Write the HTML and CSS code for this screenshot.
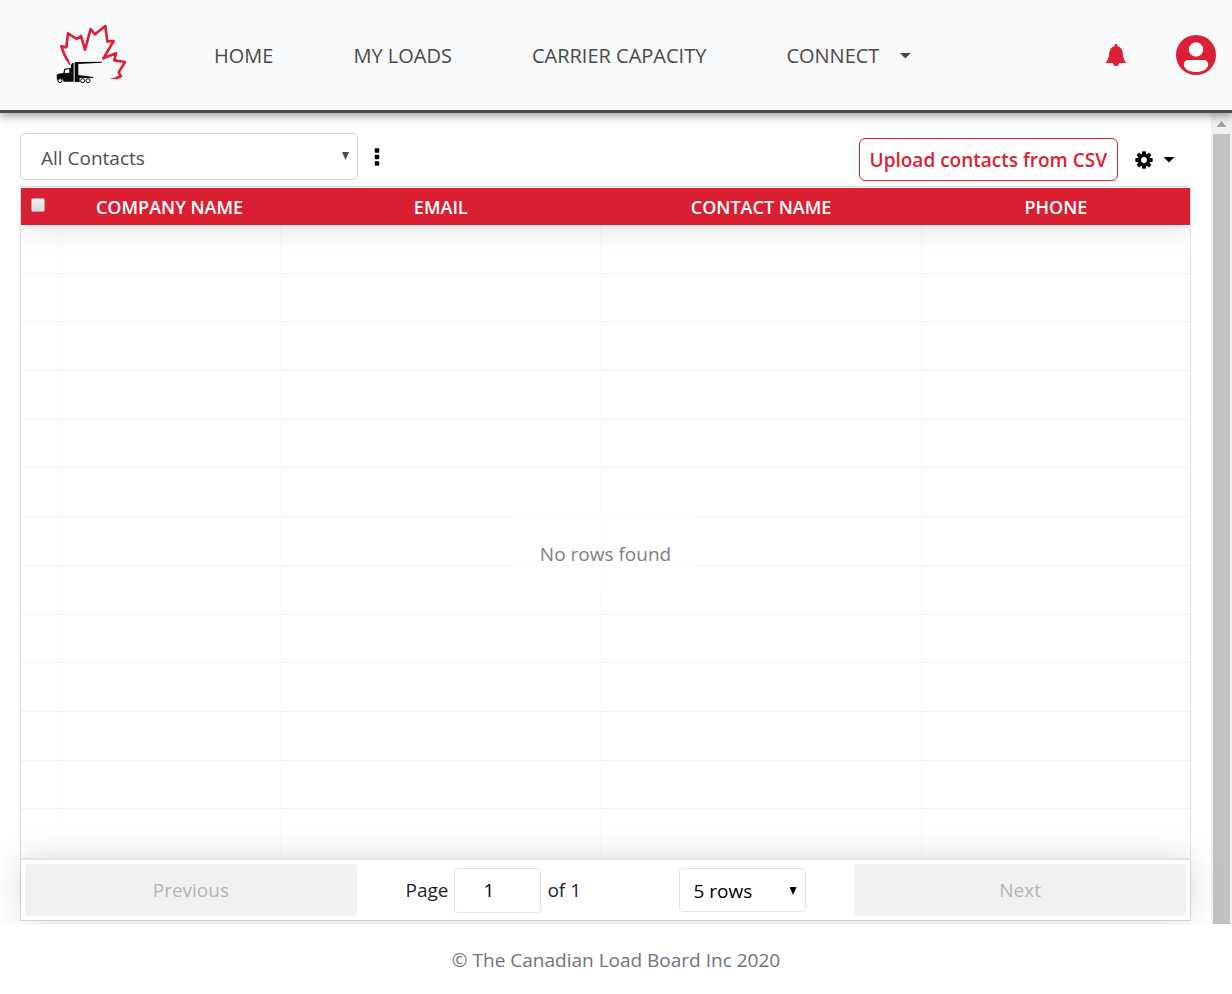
FILE: index.html
```html
<!DOCTYPE html>
<html lang="en">
<head>
<meta charset="utf-8">
<title>The Canadian Load Board</title>
<meta name="viewport" content="width=device-width, initial-scale=1">
<link rel="stylesheet" href="styles.css">
</head>
<body>
<header class="topbar">
  <a class="brand" href="#" aria-label="The Canadian Load Board">
    <svg class="brand-logo" viewBox="0 0 330 270" aria-hidden="true">
      <path d="M82 151C75 139 68 122 64 109L79 112L84 70L110 87L123 78L135 119L152 57L165 73L196 48L202 94L221 93L190 145L228 130L223 151L255 156L236 187L243 199L228 205" fill="none" stroke="#dc1f3a" stroke-width="8" stroke-linejoin="round"/>
      <path d="M86 148L92 165L88 165L78 150ZM209 206L234 200L230 208Z" fill="#dc1f3a"/>
      <path d="M50 195L55 191L70 189L73 176L92 174L93 165L97 159L101 159L101 215L71 215C70 203 53 202 51 214ZM104 156L186 155L186 158L115 162L115 195L160 201L160 204L119 204L119 216L104 216Z" fill="#0b0b0b"/>
      <path d="M76 179L88 178V188L74 189Z" fill="#f8f9fb"/>
      <g fill="#f8f9fb" stroke="#0b0b0b" stroke-width="3"><circle cx="60" cy="212" r="6"/><circle cx="128" cy="212" r="6"/><circle cx="144" cy="212" r="6"/></g>
    </svg>
  </a>
  <nav class="nav">
    <a href="#">HOME</a>
    <a href="#">MY LOADS</a>
    <a href="#">CARRIER CAPACITY</a>
    <a class="nav-menu" href="#">CONNECT <span class="caret"></span></a>
  </nav>
  <div class="account">
    <button class="plain-button" type="button" aria-label="Notifications">
      <svg class="bell" viewBox="0 0 22 24" aria-hidden="true"><path d="M11 1c.9 0 1.500.6 1.500 1.500v.7c3.100.7 5 3.300 5.200 6.300.3 5 1.300 7.600 3.800 10.500H.5C3 17.100 4 14.500 4.300 9.500 4.500 6.500 6.400 3.900 9.500 3.200v-.7C9.500 1.600 10.100 1 11 1ZM8 19.500h6c0 2.600-1.300 3.600-3 3.600s-3-1-3-3.600Z" fill="#dc1f35"/></svg>
    </button>
    <button class="plain-button" type="button" aria-label="Account">
      <svg class="avatar" viewBox="0 0 40 40" aria-hidden="true"><circle cx="20" cy="20" r="20" fill="#dc1f35"/><circle cx="20" cy="14.500" r="7.200" fill="#fff"/><path d="M12.500 25h15c3 0 4.600 2 4.600 4.500 0 5-6 7.500-12.100 7.500S7.900 34.500 7.900 29.500C7.900 27 9.500 25 12.500 25Z" fill="#fff"/></svg>
    </button>
  </div>
</header>

<div class="viewport">
  <main class="content">
    <div class="toolbar">
      <div class="toolbar-group">
        <div class="select-wrap">
          <select class="list-select" aria-label="Contact list"><option>All Contacts</option></select>
          <span class="select-arrow"></span>
        </div>
        <button class="plain-button" type="button" aria-label="List options">
          <svg class="kebab" viewBox="0 0 6 18" aria-hidden="true"><path d="M1.500 1h3v3h-3ZM1.500 7.500h3v3h-3ZM1.500 14h3v3h-3Z" fill="#000" stroke="#000" stroke-width="1.500" stroke-linejoin="round"/></svg>
        </button>
      </div>
      <div class="toolbar-group toolbar-actions">
        <button class="upload" type="button">Upload contacts from CSV</button>
        <button class="plain-button settings" type="button" aria-label="Settings">
          <svg class="gear" viewBox="0 0 20 20" aria-hidden="true"><g fill="#000"><circle cx="10" cy="10" r="6.600"/><rect x="8" y="1.300" width="4" height="17.400" rx=".8"/><rect x="8" y="1.300" width="4" height="17.400" rx=".8" transform="rotate(45 10 10)"/><rect x="8" y="1.300" width="4" height="17.400" rx=".8" transform="rotate(90 10 10)"/><rect x="8" y="1.300" width="4" height="17.400" rx=".8" transform="rotate(135 10 10)"/></g><circle cx="10" cy="10" r="2.900" fill="#fff"/></svg>
          <span class="caret"></span>
        </button>
      </div>
    </div>

    <section class="grid">
      <div class="table-area">
        <table class="contacts">
          <thead>
            <tr>
              <th class="col-check"><input class="check" type="checkbox" aria-label="Select all contacts"></th>
              <th class="col-company">COMPANY NAME</th>
              <th class="col-wide">EMAIL</th>
              <th class="col-wide">CONTACT NAME</th>
              <th>PHONE</th>
            </tr>
          </thead>
          <tbody>
            <tr><td></td><td></td><td></td><td></td><td></td></tr>
            <tr><td></td><td></td><td></td><td></td><td></td></tr>
            <tr><td></td><td></td><td></td><td></td><td></td></tr>
            <tr><td></td><td></td><td></td><td></td><td></td></tr>
            <tr><td></td><td></td><td></td><td></td><td></td></tr>
            <tr><td></td><td></td><td></td><td></td><td></td></tr>
            <tr><td></td><td></td><td></td><td></td><td></td></tr>
            <tr><td></td><td></td><td></td><td></td><td></td></tr>
            <tr><td></td><td></td><td></td><td></td><td></td></tr>
            <tr><td></td><td></td><td></td><td></td><td></td></tr>
            <tr><td></td><td></td><td></td><td></td><td></td></tr>
            <tr><td></td><td></td><td></td><td></td><td></td></tr>
            <tr><td></td><td></td><td></td><td></td><td></td></tr>
          </tbody>
        </table>
      </div>
      <div class="pager">
        <button class="pager-button" type="button" disabled>Previous</button>
        <div class="pager-center">
          <label class="page-label">Page <input class="page-input" type="text" inputmode="numeric" value="1"> of 1</label>
          <div class="select-wrap rows-wrap">
            <select class="rows-select" aria-label="Rows per page"><option>5 rows</option></select>
            <span class="select-arrow"></span>
          </div>
        </div>
        <button class="pager-button" type="button" disabled>Next</button>
      </div>
      <div class="no-data">No rows found</div>
    </section>
  </main>
  <div class="scrollbar" aria-hidden="true">
    <span class="scroll-up"></span>
    <span class="scroll-thumb"></span>
  </div>
</div>

<footer class="footer">© The Canadian Load Board Inc 2020</footer>
</body>
</html>
```

FILE: styles.css
```css
* { box-sizing: border-box; }

body {
  margin: 0;
  min-height: 100vh;
  display: flex;
  flex-direction: column;
  background: #fff;
  color: #212529;
  font-family: "Open Sans", "Noto Sans", sans-serif;
  font-size: 19px;
  line-height: 28px;
}

button, input, select { font: inherit; color: inherit; }

.plain-button {
  display: flex;
  align-items: center;
  padding: 0;
  border: 0;
  background: none;
}

.caret {
  width: 12px;
  height: 6px;
  background: currentColor;
  clip-path: polygon(0 0, 100% 0, 50% 100%);
}

.topbar {
  position: relative;
  z-index: 2;
  display: flex;
  align-items: center;
  padding: 10px 16px 10px 40px;
  background: #f8f9fb;
  border-bottom: 3px solid #4a4a4a;
  box-shadow: 0 3px 9px rgba(0, 0, 0, .38);
}

.brand { display: block; margin-right: 64px; }
.brand-logo { display: block; width: 110px; height: 90px; }

.nav { display: flex; gap: 80px; padding-top: 1px; font-size: 20px; font-weight: 500; }
.nav a { color: #4a4a4a; text-decoration: none; white-space: nowrap; }
.nav-menu { display: flex; align-items: center; gap: 20px; }

.account { display: flex; align-items: center; gap: 49px; margin-left: auto; }
.bell { width: 22px; height: 24px; }
.avatar { width: 40px; height: 40px; }

.viewport { flex: 1; display: flex; overflow: hidden; }

.content {
  flex: 1;
  display: flex;
  flex-direction: column;
  padding: 20px 20px 3px;
}

.toolbar {
  display: flex;
  justify-content: space-between;
  align-items: flex-start;
  padding-bottom: 5px;
}
.toolbar-group { display: flex; align-items: center; gap: 16px; }
.toolbar-actions { padding: 5px 16px 0 0; }

.select-wrap { position: relative; }
.select-arrow {
  position: absolute;
  top: 19px;
  right: 9px;
  width: 7px;
  height: 8px;
  background: #495057;
  clip-path: polygon(0 0, 100% 0, 50% 100%);
  pointer-events: none;
}

.list-select {
  appearance: none;
  display: block;
  width: 338px;
  height: 47px;
  padding: 2px 20px 0;
  border: 1px solid #ced4da;
  border-radius: 5px;
  background: #fff;
  color: #495057;
}
.kebab { width: 6px; height: 18px; }

.upload {
  height: 43px;
  padding: 0 10px;
  border: 1px solid #dc1f32;
  border-radius: 6px;
  background: #fff;
  color: #dc1f32;
  font-weight: 600;
}
.settings { gap: 9px; color: #000; }
.gear { width: 20px; height: 20px; }

.grid {
  position: relative;
  flex: 1;
  display: flex;
  flex-direction: column;
  border: 1px solid #dedede;
}

.table-area { flex: 1; display: flex; padding-top: 1px; }

.contacts {
  width: 100%;
  table-layout: fixed;
  border-collapse: separate;
  border-spacing: 0;
}
.contacts thead { box-shadow: 0 2px 30px rgba(0, 0, 0, .14); clip-path: inset(0 0 -48px 0); }
.contacts th {
  height: 37px;
  padding: 0;
  background: #db1f32;
  border-right: 1px solid rgba(0, 0, 0, .02);
  color: #fff;
  font-weight: 600;
  font-size: 18px;
}
.contacts td {
  height: 47px;
  padding: 0;
  border-right: 1px solid rgba(0, 0, 0, .02);
  border-bottom: 1px solid rgba(0, 0, 0, .05);
}
.contacts th:last-child, .contacts td:last-child { border-right: 0; }
.contacts tr:last-child td { border-bottom: 0; }
.contacts .col-check {
  width: 38px;
  padding: 10px 0 0 10px;
  border-right-color: rgba(0, 0, 0, .06);
  text-align: left;
  vertical-align: top;
  line-height: 0;
}
.col-company { width: 19%; }
.col-wide { width: 27.4%; }

.check {
  appearance: none;
  width: 14px;
  height: 14px;
  margin: 0;
  border: 1px solid #aaa;
  border-radius: 2px;
  background: linear-gradient(#eee, #d9d9d9);
}

.no-data {
  position: absolute;
  top: 50%;
  left: 50%;
  padding: 26px 24px;
  transform: translate(-50%, -50%);
  background: rgba(255, 255, 255, .8);
  color: #808080;
  white-space: nowrap;
}

.pager {
  position: relative;
  display: flex;
  align-items: center;
  padding: 4px;
  border-top: 2px solid #e3e3e3;
  background: #fff;
  box-shadow: 0 0 30px rgba(0, 0, 0, .15);
}
.pager-button {
  flex: 1;
  height: 52px;
  padding: 0;
  border: 0;
  border-radius: 3px;
  background: #f1f1f1;
  color: #b4b4b4;
}
.pager-center {
  flex: 1.5;
  display: flex;
  align-items: center;
  justify-content: space-around;
}
.page-label { display: flex; align-items: center; gap: 6px; }
.page-input {
  width: 87px;
  height: 45px;
  padding: 0 18px 0 0;
  border: 1px solid #e3e3e3;
  border-radius: 4px;
  color: #000;
  text-align: center;
}
.rows-select {
  appearance: none;
  display: block;
  width: 127px;
  height: 44px;
  padding: 2px 14px 0;
  border: 1px solid #e3e3e3;
  border-radius: 4px;
  background: #fff;
  color: #000;
}
.rows-wrap .select-arrow { background: #000; }

.scrollbar {
  width: 21px;
  display: flex;
  flex-direction: column;
  align-items: center;
  gap: 7px;
  padding: 8px 2px 0;
  background: #f1f1f1;
}
.scroll-up {
  width: 10px;
  height: 6px;
  background: #a3a3a3;
  clip-path: polygon(50% 0, 100% 100%, 0 100%);
}
.scroll-thumb { flex: 1; width: 17px; background: #c1c1c1; }

.footer {
  padding: 22px 16px 20px;
  background: #fff;
  color: #6c757d;
  text-align: center;
}
```
